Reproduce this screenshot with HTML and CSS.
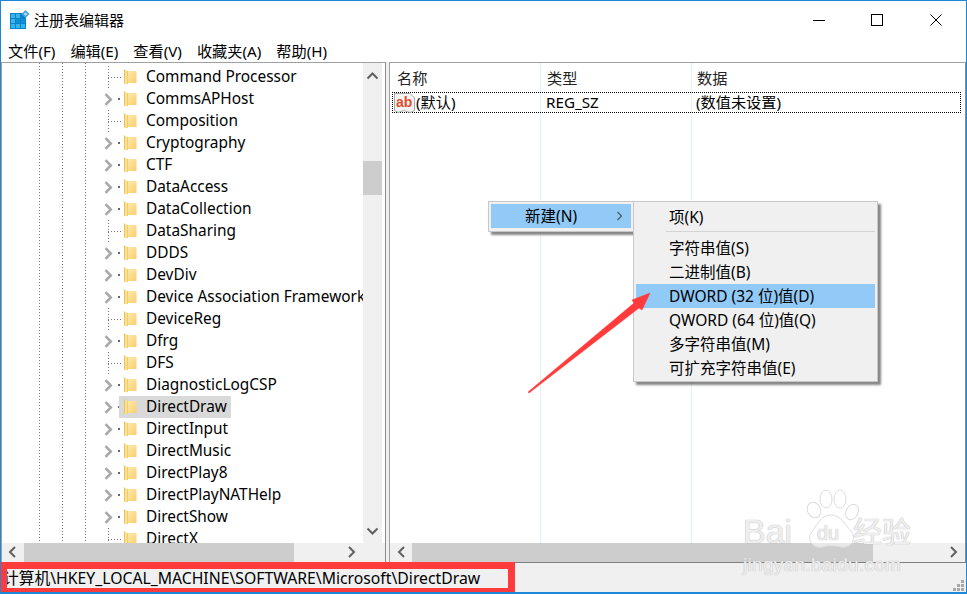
FILE: index.html
```html
<!DOCTYPE html>
<html lang="zh-CN">
<head>
<meta charset="utf-8">
<title>注册表编辑器</title>
<link rel="stylesheet" href="styles.css">
</head>
<body>
<svg class="defs" width="0" height="0" aria-hidden="true">
  <defs>
    <linearGradient id="fg" x1="0" y1="0" x2="1" y2="1">
      <stop offset="0" stop-color="#fdeab0"/>
      <stop offset="1" stop-color="#f8cf6a"/>
    </linearGradient>
  </defs>
  <symbol id="folder" viewBox="0 0 13 16">
    <path d="M3 2H12.5V14H3Z" fill="url(#fg)"/>
    <path d="M0 0.5L3.5 2V15.5L0 14.5Z" fill="#fbe09a"/>
    <path d="M0.5 0.5V14.5" stroke="#eec25a" stroke-width="1"/>
    <path d="M3.5 2V15" stroke="#f3cc6c" stroke-width="1"/>
  </symbol>
  <symbol id="chev" viewBox="0 0 9 13">
    <path d="M1.5 1.2L6.8 6.5L1.5 11.8" fill="none" stroke="#a9a9a9" stroke-width="2.6"/>
  </symbol>
</svg>
<div class="window">
  <header class="titlebar">
    <svg class="appicon" width="20" height="20" viewBox="0 0 20 20">
      <rect x="0" y="3" width="16" height="16" fill="#0a83c8"/>
      <path d="M1 4h4v4H1zM6 4h4v4H6zM1 9h4v4H1zM6 9h4v4H6zM11 9h4v4h-4zM1 14h4v4H1zM6 14h4v4H6zM11 14h4v4h-4z" fill="#35b4ee"/>
      <path d="M6 9h4v4H6zM11 9h4v4h-4z" fill="#0f8fd6"/>
      <path d="M15.5 0L19.5 4L15.5 8L11.5 4Z" fill="#4aa6dc"/>
      <path d="M15.5 2.5L17 4L15.5 5.5L14 4Z" fill="#d6effb"/>
    </svg>
    <span class="title">注册表编辑器</span>
    <div class="controls">
      <span class="ctl"><svg width="14" height="14" viewBox="0 0 14 14"><path d="M1 7.5H13" stroke="#000" stroke-width="1"/></svg></span>
      <span class="ctl"><svg width="14" height="14" viewBox="0 0 14 14"><rect x="1.5" y="1.5" width="11" height="11" fill="none" stroke="#000" stroke-width="1"/></svg></span>
      <span class="ctl"><svg width="14" height="14" viewBox="0 0 14 14"><path d="M1.5 1.5L12.5 12.5M12.5 1.5L1.5 12.5" stroke="#000" stroke-width="1"/></svg></span>
    </div>
  </header>
  <nav class="menubar">
    <span>文件(F)</span><span>编辑(E)</span><span>查看(V)</span><span>收藏夹(A)</span><span>帮助(H)</span>
  </nav>
  <main class="panes">
    <section class="pane left">
      <div class="pane-top">
        <div class="tree">
          <div class="row leaf"><svg class="folder"><use href="#folder"/></svg><span class="label">Command Processor</span></div>
          <div class="row"><svg class="chev"><use href="#chev"/></svg><svg class="folder"><use href="#folder"/></svg><span class="label">CommsAPHost</span></div>
          <div class="row leaf"><svg class="folder"><use href="#folder"/></svg><span class="label">Composition</span></div>
          <div class="row"><svg class="chev"><use href="#chev"/></svg><svg class="folder"><use href="#folder"/></svg><span class="label">Cryptography</span></div>
          <div class="row"><svg class="chev"><use href="#chev"/></svg><svg class="folder"><use href="#folder"/></svg><span class="label">CTF</span></div>
          <div class="row"><svg class="chev"><use href="#chev"/></svg><svg class="folder"><use href="#folder"/></svg><span class="label">DataAccess</span></div>
          <div class="row"><svg class="chev"><use href="#chev"/></svg><svg class="folder"><use href="#folder"/></svg><span class="label">DataCollection</span></div>
          <div class="row leaf"><svg class="folder"><use href="#folder"/></svg><span class="label">DataSharing</span></div>
          <div class="row"><svg class="chev"><use href="#chev"/></svg><svg class="folder"><use href="#folder"/></svg><span class="label">DDDS</span></div>
          <div class="row"><svg class="chev"><use href="#chev"/></svg><svg class="folder"><use href="#folder"/></svg><span class="label">DevDiv</span></div>
          <div class="row"><svg class="chev"><use href="#chev"/></svg><svg class="folder"><use href="#folder"/></svg><span class="label">Device Association Framework</span></div>
          <div class="row leaf"><svg class="folder"><use href="#folder"/></svg><span class="label">DeviceReg</span></div>
          <div class="row"><svg class="chev"><use href="#chev"/></svg><svg class="folder"><use href="#folder"/></svg><span class="label">Dfrg</span></div>
          <div class="row leaf"><svg class="folder"><use href="#folder"/></svg><span class="label">DFS</span></div>
          <div class="row"><svg class="chev"><use href="#chev"/></svg><svg class="folder"><use href="#folder"/></svg><span class="label">DiagnosticLogCSP</span></div>
          <div class="row current"><svg class="chev"><use href="#chev"/></svg><svg class="folder"><use href="#folder"/></svg><span class="label">DirectDraw</span></div>
          <div class="row"><svg class="chev"><use href="#chev"/></svg><svg class="folder"><use href="#folder"/></svg><span class="label">DirectInput</span></div>
          <div class="row"><svg class="chev"><use href="#chev"/></svg><svg class="folder"><use href="#folder"/></svg><span class="label">DirectMusic</span></div>
          <div class="row"><svg class="chev"><use href="#chev"/></svg><svg class="folder"><use href="#folder"/></svg><span class="label">DirectPlay8</span></div>
          <div class="row"><svg class="chev"><use href="#chev"/></svg><svg class="folder"><use href="#folder"/></svg><span class="label">DirectPlayNATHelp</span></div>
          <div class="row"><svg class="chev"><use href="#chev"/></svg><svg class="folder"><use href="#folder"/></svg><span class="label">DirectShow</span></div>
          <div class="row leaf"><svg class="folder"><use href="#folder"/></svg><span class="label">DirectX</span></div>
        </div>
        <div class="vscroll">
          <svg class="arrow" width="19" height="24" viewBox="0 0 19 24"><path d="M4.5 15.5L9.5 10.5L14.5 15.5" fill="none" stroke="#606060" stroke-width="2"/></svg>
          <div class="vtrack"><div class="vthumb"></div></div>
          <svg class="arrow" width="19" height="24" viewBox="0 0 19 24"><path d="M4.5 9.5L9.5 14.5L14.5 9.5" fill="none" stroke="#606060" stroke-width="2"/></svg>
        </div>
      </div>
      <div class="hscroll">
        <svg class="harrow" width="22" height="18" viewBox="0 0 22 18"><path d="M14 4L9 9L14 14" fill="none" stroke="#606060" stroke-width="2"/></svg>
        <div class="htrack"><div class="hthumb thumb-left"></div></div>
        <svg class="harrow" width="22" height="18" viewBox="0 0 22 18"><path d="M8 4L13 9L8 14" fill="none" stroke="#606060" stroke-width="2"/></svg>
      </div>
    </section>
    <section class="pane right">
      <div class="list">
        <div class="list-head">
          <span class="col c1">名称</span><span class="col c2">类型</span><span class="col c3">数据</span>
        </div>
        <div class="list-row">
          <span class="col c1 name">
            <svg class="ab" width="21" height="20" viewBox="0 0 21 20">
              <path d="M0.5 0.5H16L20.5 5V17.5L16 19.5L10 17.5L4 19.5L0.5 17.5Z" fill="#f4f4f4" stroke="#a8a8a8"/>
              <text x="2" y="13.5" class="ab-text">ab</text>
            </svg>(默认)</span>
          <span class="col c2">REG_SZ</span><span class="col c3">(数值未设置)</span>
        </div>
      </div>
      <div class="hscroll">
        <svg class="harrow" width="22" height="18" viewBox="0 0 22 18"><path d="M14 4L9 9L14 14" fill="none" stroke="#606060" stroke-width="2"/></svg>
        <div class="htrack"><div class="hthumb thumb-right"></div></div>
        <svg class="harrow" width="22" height="18" viewBox="0 0 22 18"><path d="M8 4L13 9L8 14" fill="none" stroke="#606060" stroke-width="2"/></svg>
      </div>
    </section>
  </main>
  <footer class="statusbar">
    <svg class="grip" width="12" height="12" viewBox="0 0 12 12"><path d="M8 0h3v3H8zM4 4h3v3H4zM8 4h3v3H8zM0 8h3v3H0zM4 8h3v3H4zM8 8h3v3H8z" fill="#a8a8a8"/></svg>
  </footer>

  <div class="menu first">
    <div class="menu-item active"><span>新建(N)</span>
      <svg class="sub-chev" width="7" height="10" viewBox="0 0 7 10"><path d="M1.5 1L5.5 5L1.5 9" fill="none" stroke="#555" stroke-width="1.2"/></svg>
    </div>
  </div>
  <div class="menu second">
    <div class="sub-item">项(K)</div>
    <div class="sub-sep"></div>
    <div class="sub-item">字符串值(S)</div>
    <div class="sub-item">二进制值(B)</div>
    <div class="sub-item active">DWORD (32 位)值(D)</div>
    <div class="sub-item">QWORD (64 位)值(Q)</div>
    <div class="sub-item">多字符串值(M)</div>
    <div class="sub-item">可扩充字符串值(E)</div>
  </div>

  <svg class="red-arrow" width="140" height="120" viewBox="0 0 140 120">
    <path d="M1 105L107 16L105 13L123 6L115 23L112 21L2 106Z" fill="#ff3b3b" stroke="#ff3b3b" stroke-width="0.5" stroke-linejoin="round"/>
  </svg>

  <div class="red-box"><span class="path">计算机\HKEY_LOCAL_MACHINE\SOFTWARE\Microsoft\DirectDraw</span></div>

  <div class="watermark">
    <svg class="paw" width="60" height="64" viewBox="0 0 60 64">
      <g fill="rgba(255,255,255,.55)" stroke="#dcdcdc" stroke-width="1">
        <ellipse cx="13" cy="21" rx="6.5" ry="8" transform="rotate(-25 13 21)"/>
        <ellipse cx="25" cy="10" rx="6" ry="9"/>
        <ellipse cx="39" cy="10" rx="6" ry="9"/>
        <ellipse cx="51" cy="23" rx="6" ry="8" transform="rotate(25 51 23)"/>
        <path d="M30 26C40 26 44 36 50 42C56 50 50 60 40 58C34 57 28 56 22 58C12 60 6 52 10 44C16 36 20 26 30 26Z"/>
      </g>
    </svg>
    <span class="wm-bai">Bai</span>
    <span class="wm-du">du</span>
    <span class="wm-cn">经验</span>
    <span class="wm-url">jingyan.baidu.com</span>
  </div>
</div>
</body>
</html>
```
FILE: styles.css
```css
* { box-sizing: border-box; }
html, body { margin: 0; padding: 0; }
body {
  width: 967px;
  height: 594px;
  overflow: hidden;
  font-family: "Noto Sans", "Noto Sans CJK SC", sans-serif;
  font-size: 15px;
  color: #000;
  background: #fff;
}
.defs { position: absolute; }
.window {
  position: relative;
  width: 967px;
  height: 594px;
  display: flex;
  flex-direction: column;
  border: 1px solid #1e88d8;
  border-bottom-width: 2px;
  background: #fff;
  overflow: hidden;
}
.titlebar {
  height: 39px;
  flex: none;
  display: flex;
  align-items: center;
  padding: 0 1px 2px 9px;
}
.appicon { flex: none; }
.title { margin-left: 4px; font-size: 15px; line-height: 20px; }
.controls { margin-left: auto; display: flex; }
.ctl {
  width: 58.5px;
  display: flex;
  justify-content: center;
  align-items: center;
}
.menubar {
  height: 22px;
  flex: none;
  display: flex;
  align-items: center;
  gap: 15px;
  padding-left: 7px;
  font-size: 15.2px;
  line-height: 20px;
  background: #fff;
}
.panes {
  flex: 1;
  min-height: 0;
  display: flex;
  gap: 3px;
  background: #f0f0f0;
}
.pane {
  display: flex;
  flex-direction: column;
  border: 1px solid #a0a0a0;
  border-right-color: #8c8c8c;
  border-bottom: 0;
  background: #fff;
  min-width: 0;
}
.left { width: 385px; border-left: 1px solid #a0a0a0; }
.right { flex: 1; }
.pane-top { flex: 1; min-height: 0; display: flex; }
.tree {
  flex: 1;
  min-width: 0;
  overflow: hidden;
  padding-top: 3px;
  background-image:
    repeating-linear-gradient(#777 0 1px, transparent 1px 3px),
    repeating-linear-gradient(#777 0 1px, transparent 1px 3px),
    repeating-linear-gradient(#777 0 1px, transparent 1px 3px);
  background-size: 1px 100%;
  background-position: 37px 0, 60px 0, 83px 0;
  background-repeat: no-repeat;
}
.row {
  position: relative;
  height: 22px;
  display: flex;
  align-items: center;
  padding-left: 122px;
  white-space: nowrap;
  background-image: radial-gradient(#666 50%, transparent 55%);
  background-size: 2px 2px;
  background-position: 116px 10px;
  background-repeat: no-repeat;
}
.row.leaf {
  background-image:
    repeating-linear-gradient(#777 0 1px, transparent 1px 3px),
    repeating-linear-gradient(90deg, #777 0 1px, transparent 1px 3px);
  background-size: 1px 22px, 14px 1px;
  background-position: 106px 0, 106px 11px;
}
.row.current::before {
  content: "";
  position: absolute;
  left: 117px;
  top: 0;
  width: 112px;
  height: 22px;
  background: #d9d9d9;
}
.chev {
  position: absolute;
  left: 102px;
  top: 5px;
  width: 9px;
  height: 13px;
}
.folder {
  position: relative;
  flex: none;
  width: 13px;
  height: 16px;
}
.label {
  position: relative;
  margin-left: 9px;
  font-size: 15.4px;
  line-height: 22px;
}
.vscroll {
  flex: none;
  width: 19px;
  margin-right: 3px;
  display: flex;
  flex-direction: column;
  background: #f0f0f0;
}
.arrow { flex: none; }
.vtrack { flex: 1; padding-top: 74px; }
.vthumb { height: 34px; background: #cdcdcd; }
.hscroll {
  flex: none;
  height: 19px;
  display: flex;
  background: #f0f0f0;
}
.left .hscroll { padding-right: 22px; }
.left .hscroll .harrow:first-child { margin-left: -1px; }
.harrow { flex: none; }
.htrack { flex: 1; }
.hthumb { height: 100%; background: #cdcdcd; }
.thumb-left { width: 270px; margin-left: 1px; }
.thumb-right { width: 461px; }
.list {
  flex: 1;
  min-height: 0;
  font-size: 15.2px;
  background-image:
    linear-gradient(#e5effa, #e5effa),
    linear-gradient(#e5effa, #e5effa);
  background-size: 1px 100%;
  background-position: 150px 0, 301px 0;
  background-repeat: no-repeat;
}
.list-head {
  height: 29px;
  display: flex;
  align-items: center;
  padding-left: 7px;
  color: #222;
  line-height: 20px;
}
.list-row {
  height: 21px;
  margin-left: 2px;
  margin-right: 4px;
  display: flex;
  align-items: center;
  padding-left: 2px;
  border: 1px dotted #000;
  line-height: 19px;
}
.col { display: flex; align-items: center; white-space: nowrap; }
.c1 { width: 150px; }
.c2 { width: 150px; }
.list-row .c1 { width: 152px; margin-left: -1px; }
.ab { flex: none; margin-right: 1px; }
.ab-text { font-family: "Liberation Sans", sans-serif; font-weight: 700; font-size: 14px; fill: #e0502e; }
.statusbar {
  height: 30px;
  flex: none;
  position: relative;
  background: #f0f0f0;
  border-top: 1px solid #808080;
}
.grip { position: absolute; right: 1px; bottom: 0; }
.menu {
  position: absolute;
  background: #f0f0f0;
  border: 1px solid #c8c8c8;
  box-shadow: 3px 3px 2px rgba(70, 70, 70, 0.65);
  font-size: 15.5px;
  line-height: 20px;
}
.first {
  left: 487px;
  top: 200px;
  width: 146px;
  height: 31px;
  padding: 2px;
}
.menu-item {
  height: 24px;
  display: flex;
  align-items: center;
  padding-left: 34px;
  position: relative;
}
.active { background: #91c9f7; }
.sub-chev { position: absolute; right: 8px; top: 7px; }
.second {
  left: 632px;
  top: 200px;
  width: 245px;
  height: 181px;
  padding: 3px 2px;
}
.sub-item {
  height: 24px;
  display: flex;
  align-items: center;
  padding-left: 33px;
  white-space: nowrap;
}
.sub-sep {
  height: 7px;
  margin-left: 30px;
  background: linear-gradient(#d4d4d4, #d4d4d4) no-repeat 0 2px / 100% 1px;
}
.red-arrow { position: absolute; left: 526px; top: 286px; }
.red-box {
  position: absolute;
  left: -1px;
  bottom: -2px;
  width: 515px;
  height: 32px;
  border: solid #ff3b3b;
  border-width: 7px 7px 6px 7px;
  background: #f0f0f0;
  overflow: hidden;
  display: flex;
  align-items: center;
  font-size: 15.75px;
  line-height: 19px;
  white-space: nowrap;
}
.path { margin-left: -4px; }
.watermark { position: absolute; left: 0; top: 0; width: 100%; height: 100%; pointer-events: none; }
.paw { position: absolute; left: 800px; top: 488px; }
.wm-bai, .wm-du, .wm-cn, .wm-url {
  position: absolute;
  color: rgba(255, 255, 255, 0.75);
  text-shadow: 0 0 1px #bdbdbd, 0 0 1px #bdbdbd;
  font-family: "Liberation Sans", "Noto Sans CJK SC", sans-serif;
  white-space: nowrap;
}
.wm-bai { left: 742px; top: 510px; font-size: 34px; line-height: 40px; }
.wm-du { left: 816px; top: 518px; font-size: 20px; line-height: 28px; }
.wm-cn { left: 852px; top: 513px; font-size: 29px; line-height: 38px; }
.wm-url { left: 742px; top: 553px; font-size: 19px; line-height: 22px; letter-spacing: 0.3px; }
```
